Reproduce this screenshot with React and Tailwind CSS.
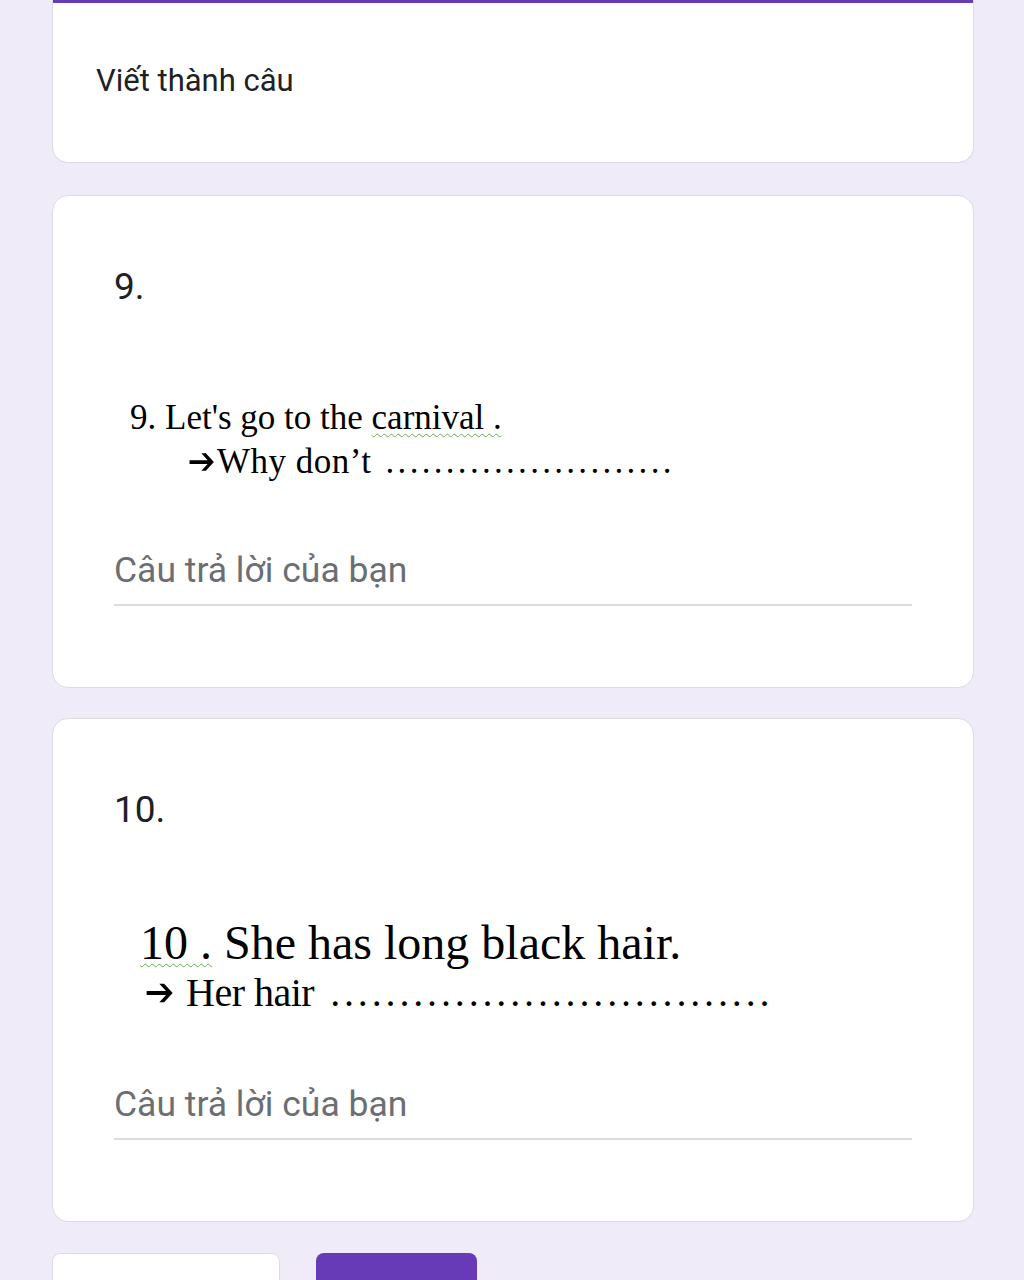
import React from 'react';

const sans = { fontFamily: 'Roboto, "Noto Sans", Arial, sans-serif' };
const serif = { fontFamily: '"Liberation Serif", "Times New Roman", serif' };

function Arrow({ size }) {
  return (
    <svg width={size} height={size} viewBox="0 0 24 24" className="inline-block align-[-0.08em]">
      <path d="M2 10.5h14.5l-5-5.5h3.6l6.4 7-6.4 7h-3.6l5-5.5H2z" fill="black" />
    </svg>
  );
}

function AnswerField() {
  return (
    <div className="border-b-2 border-[#dadce0] pb-[14px]">
      <div className="text-[35.5px] leading-[40px] text-[#6b6f74]" style={sans}>
        Câu trả lời của bạn
      </div>
    </div>
  );
}

function QuestionCard({ number, children, imageClass }) {
  return (
    <div className="rounded-2xl border border-[#dadce0] bg-white px-[61px] pt-[68px] pb-[81px]">
      <div className="text-[37px] leading-[46px] text-[#202124]" style={sans}>
        {number}
      </div>
      <div className={imageClass}>{children}</div>
      <AnswerField />
    </div>
  );
}

export default function App() {
  return (
    <div className="min-h-[1400px] bg-[#f0ebf8] px-[52px]">
      <div className="flex w-[922px] flex-col">
        {/* section header */}
        <div className="h-[163px] rounded-b-2xl border border-t-0 border-[#dadce0] bg-white">
          <div className="h-[3px] bg-[#673ab7]" />
          <div className="pl-[43px] pt-[60px] text-[31px] leading-[36px] text-[#202124]" style={sans}>
            Viết thành câu
          </div>
        </div>

        <div className="mt-[32px]">
          <QuestionCard number="9." imageClass="h-[240px] pt-[86px] pl-[16px]">
            <div className="text-[35px] leading-[44px] text-black" style={serif}>
              9. Let's go to the{' '}
              <span className="underline decoration-wavy decoration-[#6aa84f] decoration-1 underline-offset-4">carnival .</span>
            </div>
            <div className="flex items-center pl-[57px] text-[35px] leading-[44px] text-black" style={serif}>
              <Arrow size={30} />
              <span className="tracking-[0.5px]">Why don’t</span>
              <span className="ml-[14px] tracking-[3.3px]">........................</span>
            </div>
          </QuestionCard>
        </div>

        <div className="mt-[30px]">
          <QuestionCard number="10." imageClass="h-[251px] pt-[84px] pl-[26px]">
            <div className="text-[48px] leading-[52px] text-black" style={serif}>
              <span className="underline decoration-wavy decoration-[#6aa84f] decoration-1 underline-offset-4">10 .</span> She has long black hair.
            </div>
            <div className="flex items-center pl-[4px] text-[40px] leading-[48px] text-black" style={serif}>
              <Arrow size={32} />
              <span className="ml-[10px] tracking-[-0.5px]">Her hair</span>
              <span className="ml-[16px] tracking-[3.85px]">................................</span>
            </div>
          </QuestionCard>
        </div>

        <div className="mt-[31px] flex items-start gap-[36px] pb-[40px]">
          <div className="h-[50px] w-[228px] rounded-lg border border-[#dadce0] bg-white" />
          <div className="h-[50px] w-[161px] rounded-lg bg-[#673ab7]" />
        </div>
      </div>
    </div>
  );
}
